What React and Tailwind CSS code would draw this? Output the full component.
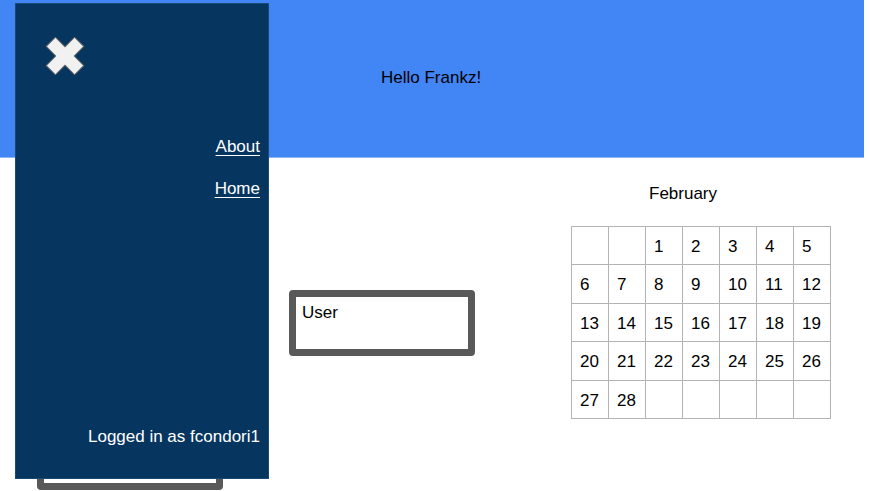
import React from 'react';

const days = [
    '', '', '1', '2', '3', '4', '5',
    '6', '7', '8', '9', '10', '11', '12',
    '13', '14', '15', '16', '17', '18', '19',
    '20', '21', '22', '23', '24', '25', '26',
    '27', '28', '', '', '', '', '',
];

function CloseIcon() {
    return (
        <svg className="w-[38px] h-[38px] overflow-visible" viewBox="0 0 38 38" xmlns="http://www.w3.org/2000/svg">
            <polygon
                transform="rotate(45 19 19)"
                points="25.5,-1 25.5,12.5 39,12.5 39,25.5 25.5,25.5 25.5,39 12.5,39 12.5,25.5 -1,25.5 -1,12.5 12.5,12.5 12.5,-1"
                fill="#f1f1f1"
                stroke="#6b6b6b"
                strokeWidth="1"
                strokeLinejoin="round"
            />
        </svg>
    );
}

function Sidebar() {
    return (
        <div className="absolute left-[15px] top-[3px] w-[254px] h-[476px] bg-[#06365f] border border-[#1a4a73] text-white flex flex-col">
            <div className="pl-[30px] pt-[33px]">
                <CloseIcon />
            </div>
            <nav className="flex flex-col items-end pr-[8px] mt-[62px] gap-[23px] leading-[19px]">
                <a href="#" className="underline underline-offset-[3px]">About</a>
                <a href="#" className="underline underline-offset-[3px]">Home</a>
            </nav>
            <div className="mt-auto mb-[32px] pr-[8px] text-right leading-[19px]">Logged in as fcondori1</div>
        </div>
    );
}

function Calendar() {
    return (
        <div className="flex flex-col">
            <div className="pl-[78px] pt-[26px] leading-[19px]">February</div>
            <div className="mt-[23px] grid grid-cols-[repeat(7,37px)] border-l border-t border-[#b3b3b3]">
                {days.map((d, i) => (
                    <div key={i} className="h-[38.4px] border-r border-b border-[#b3b3b3] pl-[8px] pt-[2px] flex items-center">
                        {d}
                    </div>
                ))}
            </div>
        </div>
    );
}

export default function App() {
    return (
        <div className="relative w-[870px] h-[491px] bg-white text-black text-[17px] overflow-hidden" style={{ fontFamily: '"Liberation Sans", Arial, sans-serif' }}>
            <header className="h-[158px] w-[864px] bg-[#4285f4] border-b border-[#8fb5f7]">
                <p className="pl-[381px] pt-[68px] leading-[19px]">Hello Frankz!</p>
            </header>

            <main className="flex items-start">
                <div className="ml-[37px] mt-[266px] w-[186px] h-[66px] border-[7px] border-[#595959] rounded-[4px]"></div>
                <div className="ml-[66px] mt-[132px] w-[186px] h-[66px] border-[7px] border-[#595959] rounded-[4px] px-[6px] pt-[6px] leading-[19px]">
                    User
                </div>
                <div className="ml-[96px]">
                    <Calendar />
                </div>
            </main>

            <Sidebar />
        </div>
    );
}
